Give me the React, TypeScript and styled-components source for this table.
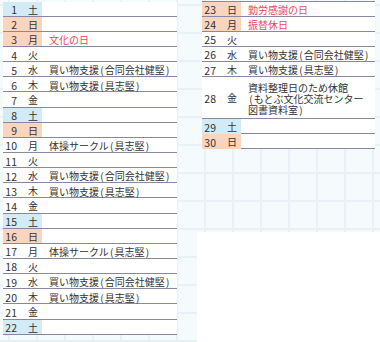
import styled, { createGlobalStyle } from "styled-components";

type Tone = "sat" | "sun" | "none";

type Day = {
  n: number;
  w: string;
  tone: Tone;
  text?: string[];
  red?: boolean;
};

const left: Day[] = [
  { n: 1, w: "土", tone: "sat" },
  { n: 2, w: "日", tone: "sun" },
  { n: 3, w: "月", tone: "sun", text: ["文化の日"], red: true },
  { n: 4, w: "火", tone: "none" },
  { n: 5, w: "水", tone: "none", text: ["買い物支援(合同会社健堅)"] },
  { n: 6, w: "木", tone: "none", text: ["買い物支援(具志堅)"] },
  { n: 7, w: "金", tone: "none" },
  { n: 8, w: "土", tone: "sat" },
  { n: 9, w: "日", tone: "sun" },
  { n: 10, w: "月", tone: "none", text: ["体操サークル(具志堅)"] },
  { n: 11, w: "火", tone: "none" },
  { n: 12, w: "水", tone: "none", text: ["買い物支援(合同会社健堅)"] },
  { n: 13, w: "木", tone: "none", text: ["買い物支援(具志堅)"] },
  { n: 14, w: "金", tone: "none" },
  { n: 15, w: "土", tone: "sat" },
  { n: 16, w: "日", tone: "sun" },
  { n: 17, w: "月", tone: "none", text: ["体操サークル(具志堅)"] },
  { n: 18, w: "火", tone: "none" },
  { n: 19, w: "水", tone: "none", text: ["買い物支援(合同会社健堅)"] },
  { n: 20, w: "木", tone: "none", text: ["買い物支援(具志堅)"] },
  { n: 21, w: "金", tone: "none" },
  { n: 22, w: "土", tone: "sat" },
];

const right: Day[] = [
  { n: 23, w: "日", tone: "sun", text: ["勤労感謝の日"], red: true },
  { n: 24, w: "月", tone: "sun", text: ["振替休日"], red: true },
  { n: 25, w: "火", tone: "none" },
  { n: 26, w: "水", tone: "none", text: ["買い物支援(合同会社健堅)"] },
  { n: 27, w: "木", tone: "none", text: ["買い物支援(具志堅)"] },
  {
    n: 28,
    w: "金",
    tone: "none",
    text: ["資料整理日のため休館", "(もとぶ文化交流センター", "図書資料室)"],
  },
  { n: 29, w: "土", tone: "sat" },
  { n: 30, w: "日", tone: "sun" },
];

const tones: Record<Tone, string> = {
  sat: "#d3ebf4",
  sun: "#fbd4be",
  none: "transparent",
};

const Global = createGlobalStyle`
  html, body {
    margin: 0;
    height: 100%;
  }
  body {
    font-family: "Noto Sans CJK JP", sans-serif;
    background-color: #f5fafd;
    background-image:
      linear-gradient(to right, #e8f1f8 2px, transparent 2px),
      linear-gradient(to bottom, #e8f1f8 2px, transparent 2px);
    background-size: 28px 28px;
    background-position: 8px 4px;
  }
`;

const Page = styled.div`
  display: flex;
  height: 100vh;
  padding-left: 3px;
  box-sizing: border-box;
  overflow: hidden;
`;

const Table = styled.div<{ $w: number; $top?: boolean }>`
  width: ${(p) => p.$w}px;
  background: #fff;
  align-self: flex-start;
  border-top: ${(p) => (p.$top ? "1.5px solid #8987a6" : "none")};
  margin-top: ${(p) => (p.$top ? "0.5px" : "1.6px")};
`;

const Row = styled.div<{ $tall?: boolean }>`
  display: grid;
  grid-template-columns: 39px 1fr;
  align-items: center;
  height: ${(p) => (p.$tall ? "42px" : "15.15px")};
  box-sizing: border-box;
  border-bottom: 1.5px solid #8987a6;
  font-size: 10px;
  line-height: 13px;
  color: #333;
`;

const DateCell = styled.div<{ $tone: Tone }>`
  align-self: stretch;
  display: flex;
  align-items: center;
  padding-top: 1px;
  white-space: nowrap;
  background: ${(p) => tones[p.$tone]};
`;

const Num = styled.span`
  display: inline-block;
  width: 14px;
  text-align: right;
  font-size: 10.5px;
  vertical-align: -0.5px;
`;

const Week = styled.span`
  display: inline-block;
  margin-left: 11px;
`;

const Note = styled.div<{ $red?: boolean; $lines: number }>`
  padding: 1px 0 0 7px;
  white-space: nowrap;
  line-height: ${(p) => (p.$lines > 1 ? "11px" : "13px")};
  color: ${(p) => (p.$red ? "#ec4863" : "#333")};
`;

const Line = styled.span`
  display: block;
`;

const Paren = styled.span`
  padding: 0 1.2px;
`;

// half-width brackets in the original sit a little wider than Noto's
const withParens = (t: string) =>
  t.split(/([()])/).map((part, i) =>
    part === "(" || part === ")" ? <Paren key={i}>{part}</Paren> : part
  );

const Side = styled.div`
  display: flex;
  flex-direction: column;
  margin-left: 20px;
  flex: 1;
`;

const RightTable = styled(Table)`
  margin-left: 5px;
`;

const Blank = styled.div`
  flex: 1;
  margin-top: 83px;
  background: #fff;
`;

const Days = ({ list }: { list: Day[] }) => (
  <>
    {list.map((d) => {
      const lines = d.text?.length ?? 0;
      return (
        <Row key={d.n} $tall={lines > 1}>
          <DateCell $tone={d.tone}>
            <span>
              <Num>{d.n}</Num>
              <Week>{d.w}</Week>
            </span>
          </DateCell>
          <Note $red={d.red} $lines={lines}>
            {d.text?.map((t) => (
              <Line key={t}>{withParens(t)}</Line>
            ))}
          </Note>
        </Row>
      );
    })}
  </>
);

export default function App() {
  return (
    <>
      <Global />
      <Page>
        <Table $w={174}>
          <Days list={left} />
        </Table>
        <Side>
          <RightTable $w={173} $top>
            <Days list={right} />
          </RightTable>
          <Blank />
        </Side>
      </Page>
    </>
  );
}
